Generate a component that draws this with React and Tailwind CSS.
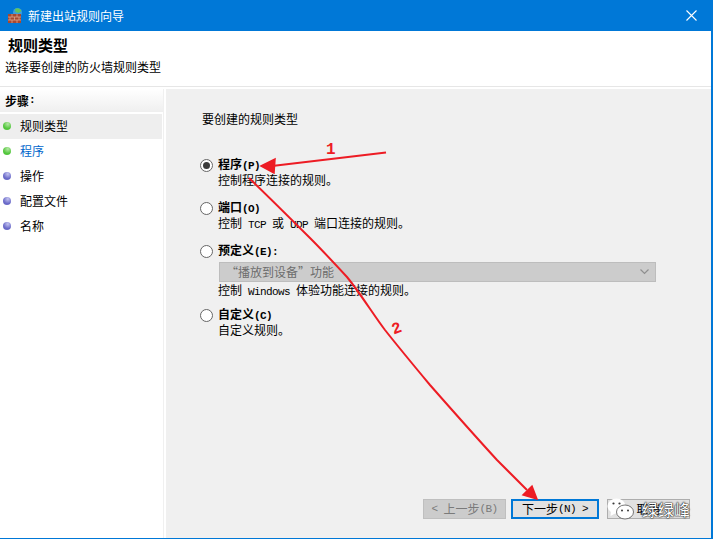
import React from 'react';

const cjk = { fontFamily: '"Noto Sans CJK SC", "Liberation Mono", monospace' };

// latin text in the dialog is a 6px wide fixed font
const M = ({ children }) => (
  <span className="font-['Liberation_Mono'] text-[11px] tracking-[-0.6px] whitespace-pre">{children}</span>
);

const steps = [
  { label: '规则类型', done: true, active: true },
  { label: '程序', done: true, current: true },
  { label: '操作' },
  { label: '配置文件' },
  { label: '名称' },
];

const Dot = ({ done }) => (
  <span
    className={`w-2 h-2 rounded-full shrink-0 ${
      done
        ? 'bg-[radial-gradient(circle_at_60%_25%,#b6e8a6,#52c63c_60%)]'
        : 'bg-[radial-gradient(circle_at_60%_25%,#c4c4f0,#6a6ac8_60%)]'
    }`}
  />
);

const Radio = ({ checked }) => (
  <span className="w-[13px] h-[13px] rounded-full border border-[#666666] bg-white flex items-center justify-center shrink-0">
    {checked && <span className="w-[7px] h-[7px] rounded-full bg-[#3c3c3c]" />}
  </span>
);

const Option = ({ title, desc, checked, className, children }) => (
  <div className={className}>
    <div className="flex items-center gap-[5px] h-[14px] -ml-[2px]">
      <Radio checked={checked} />
      <span className="font-bold text-[12px] leading-[14px] text-black">{title}</span>
    </div>
    <div className="pl-[16px]">
      {children}
      <div className="text-[12px] leading-[16px] h-[16px] text-black whitespace-pre">{desc}</div>
    </div>
  </div>
);

const Button = ({ className, children }) => (
  <div className={`h-[20px] flex items-center justify-center text-[12px] border ${className}`}>
    {children}
  </div>
);

const App = () => {
  return (
    <div className="relative w-[713px] h-[539px] overflow-hidden bg-white flex flex-col border-r-2 border-b border-[#0078d7]" style={cjk}>
      {/* title bar */}
      <div className="h-[31px] bg-[#0078d7] flex items-center pl-[7px] pr-[14px] shrink-0">
        <svg width="16" height="16" viewBox="0 0 16 16">
          <circle cx="10.500" cy="4.500" r="4.500" fill="#3f9fd8" />
          <path d="M8 1 a4.500 4.500 0 0 1 6.500 2 l-3 2 -3 -1z" fill="#62c45a" />
          <rect x="1" y="6" width="13" height="9" fill="#a8482f" />
          <path d="M1 9h13M1 12h13M5 6v3M10 6v3M3 9v3M7.500 9v3M12 9v3M5 12v3M10 12v3" stroke="#dca48c" strokeWidth="0.8" />
        </svg>
        <span className="ml-[5px] text-white text-[12px] leading-none">新建出站规则向导</span>
        <svg className="ml-auto" width="11" height="11" viewBox="0 0 11 11">
          <path d="M0.500 0.500L10.500 10.500M10.500 0.500L0.500 10.500" stroke="#fff" strokeWidth="1.1" />
        </svg>
      </div>

      {/* header */}
      <div className="h-[55px] shrink-0 pt-[5px] pl-[8px]">
        <div className="font-bold text-[15px] leading-[18px] text-black">规则类型</div>
        <div className="text-[12px] leading-[16px] text-black mt-[5px] -ml-[3px]">选择要创建的防火墙规则类型</div>
      </div>
      <div className="h-[1px] bg-[#e6e6e6] shrink-0" />

      <div className="flex flex-1 min-h-0 pt-[2px]">
        {/* sidebar */}
        <div className="w-[163px] shrink-0 bg-white">
          <div className="h-[23px] bg-gradient-to-b from-white to-[#efefef] flex items-center pl-[5px] font-bold text-[12px] text-black">
            步骤<M>:</M>
          </div>
          <div className="mt-[2px]">
            {steps.map((s) => (
              <div
                key={s.label}
                className={`h-[25px] flex items-center pl-[3px] pb-[2px] gap-[9px] text-[12px] ${s.active ? 'bg-[#eeeeee] mr-[1px]' : ''} ${s.current ? 'text-[#0066cc]' : 'text-black'}`}
              >
                <Dot done={s.done} />
                <span>{s.label}</span>
              </div>
            ))}
          </div>
        </div>
        <div className="w-[3px] shrink-0 bg-white border-l border-[#f0f0f0]" />

        {/* main */}
        <div className="flex-1 bg-[#f0f0f0] flex flex-col pl-[36px] pr-[56px] pt-[23px] pb-[19px]">
          <div className="text-[12px] leading-[14px] text-black">要创建的规则类型</div>
          <Option className="mt-[32px]" title={<>程序<M>(P)</M></>} desc="控制程序连接的规则。" checked />
          <Option className="mt-[13px]" title={<>端口<M>(O)</M></>} desc={<>控制<M> TCP </M>或<M> UDP </M>端口连接的规则。</>} />
          <Option className="mt-[13px]" title={<>预定义<M>(E):</M></>} desc={<>控制<M> Windows </M>体验功能连接的规则。</>}>
            <div className="mt-[4px] ml-[1px] h-[20px] bg-[#cccccc] border border-[#bdbdbd] flex items-center pl-[6px] pr-[6px] text-[12px] text-[#6d6d6d]">
              <span>“播放到设备”功能</span>
              <svg className="ml-auto" width="9" height="6" viewBox="0 0 9 6">
                <path d="M0.500 0.500L4.500 4.500L8.500 0.500" fill="none" stroke="#8f8f8f" strokeWidth="1.2" />
              </svg>
            </div>
          </Option>
          <Option className="mt-[10px]" title={<>自定义<M>(C)</M></>} desc="自定义规则。" />

          <div className="mt-auto flex -mr-[34px] items-end">
            <Button className="w-[83px] ml-[221px] bg-[#cccccc] border-[#bfbfbf] text-[#7a7a7a]"><M>{'< '}</M>上一步<M>(B)</M></Button>
            <Button className="w-[88px] ml-[5px] bg-[#e1e1e1] border-2 border-[#0078d7] text-black">下一步<M>{'(N) >'}</M></Button>
            <Button className="w-[83px] ml-[8px] bg-[#e1e1e1] border-[#adadad] text-black">取消</Button>
          </div>
        </div>
      </div>

      {/* red annotations */}
      <svg className="absolute inset-0 pointer-events-none" width="713" height="539" viewBox="0 0 713 539">
        <path d="M386 152.500L272 166" fill="none" stroke="#ed1c24" strokeWidth="2" />
        <path d="M261 166L275 159L274 173Z" fill="#ed1c24" stroke="#ed1c24" strokeWidth="1.500" />
        <path d="M249 178C270 198 290 218 310 238C322 250 335 264 347 277C360 293 373 314 385 330C400 349 415 367 430 385C452 410 475 436 497 460C507 470 517 480 527 490" fill="none" stroke="#ed1c24" strokeWidth="2" strokeLinejoin="round" />
        <path d="M537 499L523 495L532 486Z" fill="#ed1c24" stroke="#ed1c24" strokeWidth="1.500" />
      </svg>
      <span className="absolute left-[326px] top-[141px] font-['Liberation_Mono'] text-[16px] leading-[18px] font-bold text-[#ed1c24]">1</span>
      <span className="absolute left-[392px] top-[320px] font-['Liberation_Mono'] text-[16px] leading-[18px] font-bold text-[#ed1c24] rotate-[-20deg]">2</span>

      {/* watermark */}
      <div className="absolute left-[607px] top-[497px] flex items-center h-[24px]">
        <svg width="28" height="22" viewBox="0 0 28 22">
          <ellipse cx="9.500" cy="8" rx="9" ry="7.500" fill="#fff" />
          <path d="M4 13L3.500 18L9 15Z" fill="#fff" />
          <ellipse cx="18" cy="14" rx="8.500" ry="7" fill="#fff" stroke="#555555" strokeWidth="0.800" />
          <circle cx="6.500" cy="5.500" r="1.100" fill="#3a3a3a" />
          <circle cx="12.500" cy="5.500" r="1.100" fill="#3a3a3a" />
          <circle cx="15" cy="12.500" r="1" fill="#3a3a3a" />
          <circle cx="21" cy="12.500" r="1" fill="#3a3a3a" />
        </svg>
        <span className="ml-[7px] text-[16px] leading-none text-white [text-shadow:0_0_1px_#222,0_0_1px_#222,0_0_2px_#222]">绿绿峰</span>
      </div>
    </div>
  );
};

export default App;
